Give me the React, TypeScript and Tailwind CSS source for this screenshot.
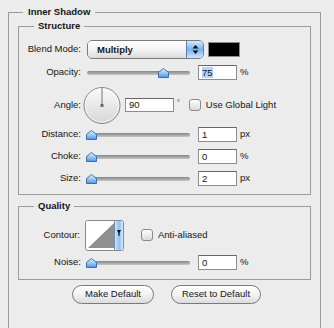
import React from "react";

type SliderProps = { thumb: number };

function Thumb() {
  return (
    <svg width="11" height="10" viewBox="0 0 11 10">
      <defs>
        <linearGradient id="thumbFill" x1="0" y1="0" x2="0" y2="1">
          <stop offset="0" stopColor="#e4f2ff" />
          <stop offset="0.5" stopColor="#9cc8f4" />
          <stop offset="1" stopColor="#4f93e0" />
        </linearGradient>
      </defs>
      <path d="M0.5 4.5 L5.5 0.5 L10.5 4.5 V9.5 H0.5 Z" fill="url(#thumbFill)" stroke="#3d6ea8" />
    </svg>
  );
}

function Slider({ thumb }: SliderProps) {
  return (
    <div className="relative h-[15px] w-[103px]">
      <div className="absolute left-0 right-0 top-[6px] h-[4px] rounded-full bg-gradient-to-b from-[#858585] to-[#c6c6c6]" />
      <div className="absolute top-[3px]" style={{ left: thumb }}>
        <Thumb />
      </div>
    </div>
  );
}

function Field({ value, selected }: { value: string; selected?: boolean }) {
  return (
    <div className="h-[15px] w-[39px] border border-[#8d8d8d] border-t-[#666] bg-white pl-[3px] leading-[13px]">
      <span className={selected ? "bg-[#b3d4fc]" : ""}>{value}</span>
    </div>
  );
}

function Label({ text, w = "w-[62px]" }: { text: string; w?: string }) {
  return <div className={`${w} shrink-0 text-right`}>{text}</div>;
}

function Checkbox() {
  return (
    <div className="h-[12px] w-[12px] rounded-[3px] border border-[#8a8a8a] bg-gradient-to-b from-white to-[#d9d9d9]" />
  );
}

function SliderRow({ label, thumb, value, unit, selected }: { label: string; thumb: number; value: string; unit: string; selected?: boolean }) {
  return (
    <div className="flex h-[15px] items-center">
      <Label text={label} />
      <div className="ml-[6px]">
        <Slider thumb={thumb} />
      </div>
      <div className="ml-[8px]">
        <Field value={value} selected={selected} />
      </div>
      <span className="ml-[3px]">{unit}</span>
    </div>
  );
}

function Dial() {
  return (
    <svg width="38" height="39" viewBox="0 0 38 39">
      <defs>
        <linearGradient id="dialFill" x1="0" y1="0" x2="0" y2="1">
          <stop offset="0" stopColor="#fafafa" />
          <stop offset="1" stopColor="#d6d6d6" />
        </linearGradient>
      </defs>
      <circle cx="19" cy="19.5" r="18" fill="url(#dialFill)" stroke="#8a8a8a" />
      <circle cx="19" cy="19.5" r="16.5" fill="none" stroke="#ffffff" strokeOpacity="0.6" />
      <line x1="19" y1="19.5" x2="19" y2="1.5" stroke="#777" strokeWidth="1" />
      <rect x="17.5" y="18" width="3" height="3" fill="#666" />
    </svg>
  );
}

function Contour() {
  return (
    <svg width="39" height="31" viewBox="0 0 39 31">
      <defs>
        <linearGradient id="aquaFill" x1="0" y1="0" x2="1" y2="0">
          <stop offset="0" stopColor="#cfe4fb" />
          <stop offset="0.5" stopColor="#8ec0f2" />
          <stop offset="1" stopColor="#d6e9fc" />
        </linearGradient>
      </defs>
      <rect x="0.5" y="0.5" width="38" height="30" rx="2" fill="#fff" stroke="#8a8a8a" />
      <path d="M3 28 L29 3 V28 Z" fill="#8f8f8f" />
      <rect x="30" y="1" width="8" height="29" rx="1.5" fill="url(#aquaFill)" />
      <line x1="29.5" y1="1" x2="29.5" y2="30" stroke="#6f8fb8" />
      <path d="M32 10 H36 L34 14 Z" fill="#000" />
      <rect x="33.5" y="13" width="1" height="3" fill="#000" />
    </svg>
  );
}

function Select() {
  return (
    <div className="flex h-[19px] w-[117px] overflow-hidden rounded-[5px] border border-[#7b7b7b]">
      <div className="flex-1 bg-gradient-to-b from-white via-[#f3f3f3] to-[#dadada] pl-[9px] font-bold leading-[17px] text-[#1a1a1a]">
        Multiply
      </div>
      <div className="flex w-[17px] items-center justify-center border-l border-[#5b7fb2] bg-gradient-to-b from-[#d8eafc] via-[#78b1ee] to-[#cfe5fc]">
        <svg width="7" height="11" viewBox="0 0 7 11">
          <path d="M0.5 4.5 L3.5 1 L6.5 4.5 Z" fill="#111" />
          <path d="M0.5 6.5 L3.5 10 L6.5 6.5 Z" fill="#111" />
        </svg>
      </div>
    </div>
  );
}

export default function App() {
  return (
    <div className="h-[328px] w-[334px] overflow-hidden bg-[#ececec] pl-[8px] pt-[5px] font-['Liberation_Sans',Arial,sans-serif] text-[9.5px] text-[#151515]">
      <fieldset className="h-[340px] w-[313px] border border-[#9b9b9b] p-0">
        <legend className="ml-[14px] px-[5px] font-bold leading-[14px]">Inner Shadow</legend>
        <div className="px-[9px]">
          <fieldset className="border border-[#9b9b9b] p-0">
            <legend className="ml-[15px] px-[4px] font-bold leading-[14px]">Structure</legend>
            <div className="pb-[8px] pt-[7px]">
              <div className="flex h-[19px] items-center">
                <Label text="Blend Mode:" />
                <div className="ml-[6px]">
                  <Select />
                </div>
                <div className="ml-[4px] h-[15px] w-[32px] border border-[#8c8c8c] bg-black" />
              </div>
              <div className="mt-[6px]">
                <SliderRow label="Opacity:" thumb={71} value="75" unit="%" selected />
              </div>
              <div className="mt-[6px] flex h-[38px] items-center">
                <Label text="Angle:" />
                <div className="ml-[2px]">
                  <Dial />
                </div>
                <div className="ml-[4px] h-[14px] w-[49px] border border-[#8d8d8d] border-t-[#666] bg-white pl-[3px] leading-[12px]">
                  90
                </div>
                <span className="ml-[3px] self-start pt-[12px] text-[7px]">°</span>
                <div className="ml-[9px]">
                  <Checkbox />
                </div>
                <span className="ml-[5px]">Use Global Light</span>
              </div>
              <div className="mt-[3px]">
                <SliderRow label="Distance:" thumb={-1} value="1" unit="px" />
              </div>
              <div className="mt-[7px]">
                <SliderRow label="Choke:" thumb={-1} value="0" unit="%" />
              </div>
              <div className="mt-[7px]">
                <SliderRow label="Size:" thumb={-1} value="2" unit="px" />
              </div>
            </div>
          </fieldset>

          <fieldset className="mt-[4px] border border-[#9b9b9b] p-0">
            <legend className="ml-[15px] px-[4px] font-bold leading-[14px]">Quality</legend>
            <div className="pb-[9px] pt-[7px]">
              <div className="flex h-[30px] items-center">
                <Label text="Contour:" w="w-[61px]" />
                <div className="ml-[5px]">
                  <Contour />
                </div>
                <div className="ml-[17px]">
                  <Checkbox />
                </div>
                <span className="ml-[5px]">Anti-aliased</span>
              </div>
              <div className="mt-[5px]">
                <SliderRow label="Noise:" thumb={-1} value="0" unit="%" />
              </div>
            </div>
          </fieldset>

          <div className="mt-[5px] flex gap-[17px] pl-[54px]">
            <button className="h-[19px] w-[82px] rounded-full border border-[#7a7a7a] bg-gradient-to-b from-white via-[#f2f2f2] to-[#dcdcdc] text-[9.5px] font-medium text-[#151515]">
              Make Default
            </button>
            <button className="h-[19px] w-[90px] rounded-full border border-[#7a7a7a] bg-gradient-to-b from-white via-[#f2f2f2] to-[#dcdcdc] text-[9.5px] font-medium text-[#151515]">
              Reset to Default
            </button>
          </div>
        </div>
      </fieldset>
    </div>
  );
}
